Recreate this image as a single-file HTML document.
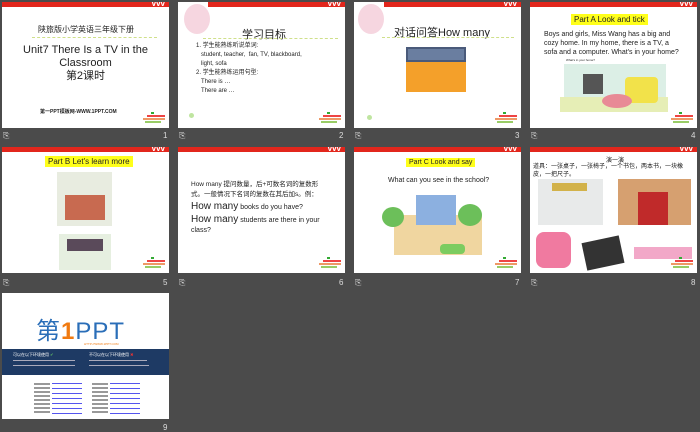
<!DOCTYPE html>
<html><head><meta charset="utf-8"><style>
*{margin:0;padding:0;box-sizing:border-box}
body{width:700px;height:432px;background:#4b4b4b;position:relative;overflow:hidden;font-family:"Liberation Sans","Noto Sans CJK SC",sans-serif;color:#222}
.s{position:absolute;width:167px;height:126px;background:#fff;overflow:hidden}
.bar{position:absolute;left:0;top:0;width:100%;height:5px;background:#e2261c}
.bar i{position:absolute;top:-1px;right:4px;color:#fff;font-size:8px;line-height:6px;font-style:normal;font-weight:bold;letter-spacing:0px}
.logo{position:absolute;right:4px;bottom:4px;width:22px;height:12px}
.logo b{position:absolute;display:block;height:2px}
.n{position:absolute;color:#ddd;font-size:8px}
.t{position:absolute;white-space:nowrap}
.dots{position:absolute;height:2px;border-top:1px dashed #cfe08a}
.hl{background:#ffff1a;padding:1px 3px}
</style></head><body>

<!-- slide 1 -->
<div class="s" style="left:2px;top:2px">
<div class="bar"><i>vvv</i></div>
<div class="t" style="left:36px;top:22px;font-size:8px">陕旅版小学英语三年级下册</div>
<div class="dots" style="left:30px;top:35px;width:125px"></div>
<div class="t" style="left:0;width:167px;text-align:center;top:42px;font-size:11px;line-height:13px">Unit7 There Is a TV in the<br>Classroom<br>第2课时</div>
<div class="t" style="left:38px;top:106px;font-size:5px;font-weight:bold">第一PPT模板网-WWW.1PPT.COM</div>
<div class="logo"><b style="left:8px;top:0;width:3px;background:#3a3;"></b><b style="left:4px;top:3px;width:18px;background:#e44"></b><b style="left:0;top:6px;width:22px;background:#e96"></b><b style="left:2px;top:9px;width:16px;background:#9c6"></b></div>
</div>
<div class="n" style="left:3px;top:131px">⎘</div><div class="n" style="left:163px;top:131px">1</div>

<!-- slide 2 -->
<div class="s" style="left:178px;top:2px">
<div class="bar" style="left:30px;width:137px"><i>vvv</i></div>
<div style="position:absolute;left:6px;top:2px;width:26px;height:30px;border-radius:50%;background:#f6d6e0"></div>
<div class="t" style="left:64px;top:24px;font-size:11px">学习目标</div>
<div class="dots" style="left:25px;top:36px;width:135px"></div>
<div class="t" style="left:18px;top:40px;font-size:6px;line-height:9px">1. 学生能熟练听说单词:<br>&nbsp;&nbsp;&nbsp;student, teacher,&nbsp; fan, TV, blackboard,<br>&nbsp;&nbsp;&nbsp;light, sofa<br>2. 学生能熟练运用句型:<br>&nbsp;&nbsp;&nbsp;There is …<br>&nbsp;&nbsp;&nbsp;There are …</div>
<div style="position:absolute;left:11px;top:111px;width:5px;height:5px;border-radius:50%;background:#bfe5a0"></div>
<div class="logo"><b style="left:8px;top:0;width:3px;background:#3a3;"></b><b style="left:4px;top:3px;width:18px;background:#e44"></b><b style="left:0;top:6px;width:22px;background:#e96"></b><b style="left:2px;top:9px;width:16px;background:#9c6"></b></div>
</div>
<div class="n" style="left:179px;top:131px">⎘</div><div class="n" style="left:339px;top:131px">2</div>

<!-- slide 3 -->
<div class="s" style="left:354px;top:2px">
<div class="bar" style="left:30px;width:137px"><i>vvv</i></div>
<div style="position:absolute;left:4px;top:2px;width:26px;height:30px;border-radius:50%;background:#f6d6e0"></div>
<div class="t" style="left:40px;top:22px;font-size:11px">对话问答How many</div>
<div class="dots" style="left:28px;top:35px;width:132px"></div>
<div style="position:absolute;left:52px;top:45px;width:60px;height:45px;background:#f4a02a"><div style="height:15px;background:#6a7ea0;border:2px solid #4a5a7a"></div></div>
<div style="position:absolute;left:13px;top:113px;width:5px;height:5px;border-radius:50%;background:#bfe5a0"></div>
<div class="logo"><b style="left:8px;top:0;width:3px;background:#3a3;"></b><b style="left:4px;top:3px;width:18px;background:#e44"></b><b style="left:0;top:6px;width:22px;background:#e96"></b><b style="left:2px;top:9px;width:16px;background:#9c6"></b></div>
</div>
<div class="n" style="left:355px;top:131px">⎘</div><div class="n" style="left:515px;top:131px">3</div>

<!-- slide 4 -->
<div class="s" style="left:530px;top:2px">
<div class="bar"><i>vvv</i></div>
<div class="t hl" style="left:41px;top:12px;font-size:8px">Part A Look and tick</div>
<div class="t" style="left:14px;top:28px;font-size:7px;line-height:9px">Boys and girls, Miss Wang has a big and<br>cozy home. In my home, there is a TV, a<br>sofa and a computer. What's in your home?</div>
<div class="t" style="left:36px;top:56px;font-size:3px">What's in your home?</div>
<div style="position:absolute;left:34px;top:62px;width:102px;height:48px;background:#dcefe6"></div>
<div style="position:absolute;left:30px;top:95px;width:108px;height:15px;background:#e6eeb6"></div>
<div style="position:absolute;left:53px;top:72px;width:20px;height:20px;background:#555"></div>
<div style="position:absolute;left:95px;top:75px;width:33px;height:26px;background:#f2e24a;border-radius:4px"></div>
<div style="position:absolute;left:72px;top:92px;width:30px;height:14px;background:#e88a96;border-radius:50%"></div>
<div class="logo"><b style="left:8px;top:0;width:3px;background:#3a3;"></b><b style="left:4px;top:3px;width:18px;background:#e44"></b><b style="left:0;top:6px;width:22px;background:#e96"></b><b style="left:2px;top:9px;width:16px;background:#9c6"></b></div>
</div>
<div class="n" style="left:531px;top:131px">⎘</div><div class="n" style="left:691px;top:131px">4</div>

<!-- slide 5 -->
<div class="s" style="left:2px;top:147px">
<div class="bar"><i>vvv</i></div>
<div class="t hl" style="left:43px;top:9px;font-size:8px">Part B Let's learn more</div>
<div style="position:absolute;left:55px;top:25px;width:55px;height:54px;background:#e8ece0"></div>
<div style="position:absolute;left:63px;top:48px;width:40px;height:25px;background:#c86a50"></div>
<div style="position:absolute;left:57px;top:87px;width:52px;height:36px;background:#e6efe0"></div>
<div style="position:absolute;left:65px;top:92px;width:36px;height:12px;background:#5a4a5a"></div>
<div class="logo"><b style="left:8px;top:0;width:3px;background:#3a3;"></b><b style="left:4px;top:3px;width:18px;background:#e44"></b><b style="left:0;top:6px;width:22px;background:#e96"></b><b style="left:2px;top:9px;width:16px;background:#9c6"></b></div>
</div>
<div class="n" style="left:3px;top:278px">⎘</div><div class="n" style="left:163px;top:278px">5</div>

<!-- slide 6 -->
<div class="s" style="left:178px;top:147px">
<div class="bar"><i>vvv</i></div>
<div class="t" style="left:13px;top:33px;font-size:6.5px;line-height:10px">How many 提问数量，后+可数名词的复数形<br>式。一般情况下名词的复数在其后加s。例：</div>
<div class="t" style="left:13px;top:54px;font-size:7px"><span style="font-size:10px">How many</span> books do you have?</div>
<div class="t" style="left:13px;top:68px;font-size:7px;line-height:10px"><span style="font-size:10px">How many</span> students are there in your<br>class?</div>
<div class="logo"><b style="left:8px;top:0;width:3px;background:#3a3;"></b><b style="left:4px;top:3px;width:18px;background:#e44"></b><b style="left:0;top:6px;width:22px;background:#e96"></b><b style="left:2px;top:9px;width:16px;background:#9c6"></b></div>
</div>
<div class="n" style="left:179px;top:278px">⎘</div><div class="n" style="left:339px;top:278px">6</div>

<!-- slide 7 -->
<div class="s" style="left:354px;top:147px">
<div class="bar"><i>vvv</i></div>
<div class="t hl" style="left:52px;top:11px;font-size:7px">Part C Look and say</div>
<div class="t" style="left:34px;top:30px;font-size:7px">What can you see in the school?</div>
<div style="position:absolute;left:40px;top:68px;width:88px;height:40px;background:#f0d6a0"></div>
<div style="position:absolute;left:62px;top:48px;width:40px;height:30px;background:#8cb0e0"></div>
<div style="position:absolute;left:28px;top:60px;width:22px;height:20px;background:#6cbf5a;border-radius:50%"></div>
<div style="position:absolute;left:104px;top:57px;width:24px;height:22px;background:#6cbf5a;border-radius:50%"></div>
<div style="position:absolute;left:86px;top:97px;width:25px;height:10px;background:#7ccc60;border-radius:4px"></div>
<div class="logo"><b style="left:8px;top:0;width:3px;background:#3a3;"></b><b style="left:4px;top:3px;width:18px;background:#e44"></b><b style="left:0;top:6px;width:22px;background:#e96"></b><b style="left:2px;top:9px;width:16px;background:#9c6"></b></div>
</div>
<div class="n" style="left:355px;top:278px">⎘</div><div class="n" style="left:515px;top:278px">7</div>

<!-- slide 8 -->
<div class="s" style="left:530px;top:147px">
<div class="bar"><i>vvv</i></div>
<div class="t" style="left:76px;top:8px;font-size:6px">演一演</div>
<div class="t" style="left:3px;top:16px;font-size:6px;line-height:8px">道具：一张桌子，一张椅子，一个书包，两本书，一块橡<br>皮，一把尺子。</div>
<div style="position:absolute;left:8px;top:32px;width:65px;height:46px;background:#e8eaea"></div>
<div style="position:absolute;left:22px;top:36px;width:35px;height:8px;background:#d2b24a"></div>
<div style="position:absolute;left:88px;top:32px;width:73px;height:46px;background:#d6a070"></div>
<div style="position:absolute;left:108px;top:45px;width:30px;height:33px;background:#c02a2a"></div>
<div style="position:absolute;left:6px;top:85px;width:35px;height:36px;background:#f07aa0;border-radius:8px"></div>
<div style="position:absolute;left:54px;top:92px;width:38px;height:28px;background:#333;transform:rotate(-12deg)"></div>
<div style="position:absolute;left:104px;top:100px;width:58px;height:12px;background:#f2a8c8"></div>
<div class="logo"><b style="left:8px;top:0;width:3px;background:#3a3;"></b><b style="left:4px;top:3px;width:18px;background:#e44"></b><b style="left:0;top:6px;width:22px;background:#e96"></b><b style="left:2px;top:9px;width:16px;background:#9c6"></b></div>
</div>
<div class="n" style="left:531px;top:278px">⎘</div><div class="n" style="left:691px;top:278px">8</div>

<!-- slide 9 -->
<div class="s" style="left:2px;top:293px">
<div class="t" style="left:34px;top:18px;font-size:24px;color:#2a6eb8;letter-spacing:1px">第<span style="color:#f07a10;font-weight:bold">1</span>PPT</div>
<div class="t" style="left:82px;top:49px;font-size:3px;color:#f07a10">HTTP://WWW.1PPT.COM</div>
<div style="position:absolute;left:0;top:56px;width:167px;height:26px;background:#1e3a64"></div>
<div class="t" style="left:11px;top:59px;font-size:4px;color:#fff">可以在以下环境使用 <span style="color:#6c6">✔</span></div>
<div class="t" style="left:87px;top:59px;font-size:4px;color:#fff">不可以在以下环境使用 <span style="color:#e33">✖</span></div>
<div style="position:absolute;left:11px;top:67px;width:62px;height:1px;background:#aab"></div>
<div style="position:absolute;left:11px;top:72px;width:62px;height:1px;background:#aab"></div>
<div style="position:absolute;left:87px;top:67px;width:58px;height:1px;background:#aab"></div>
<div style="position:absolute;left:87px;top:72px;width:60px;height:1px;background:#aab"></div>
<div style="position:absolute;left:32px;top:90px;width:16px;height:32px;background:repeating-linear-gradient(#999 0 2px,#fff 2px 4px)"></div>
<div style="position:absolute;left:50px;top:90px;width:30px;height:32px;background:repeating-linear-gradient(#55e 0 1px,#fff 1px 5px)"></div>
<div style="position:absolute;left:90px;top:90px;width:16px;height:32px;background:repeating-linear-gradient(#999 0 2px,#fff 2px 4px)"></div>
<div style="position:absolute;left:108px;top:90px;width:30px;height:32px;background:repeating-linear-gradient(#55e 0 1px,#fff 1px 5px)"></div>
</div>
<div class="n" style="left:163px;top:423px">9</div>
</body></html>
